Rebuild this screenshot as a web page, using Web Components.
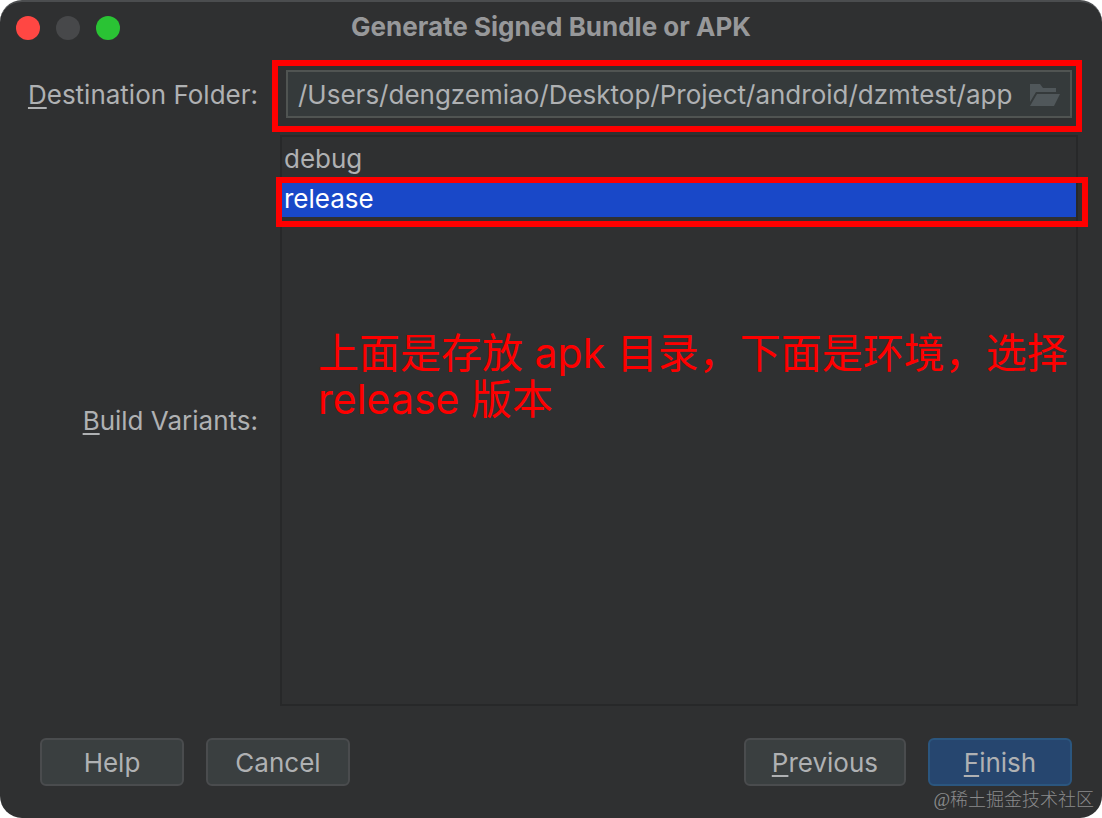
<!DOCTYPE html>
<html lang="en">
<head>
<meta charset="utf-8">
<title>Generate Signed Bundle or APK</title>
<style>
  body { margin: 0; background: #fff; font-family: Inter, "Noto Sans CJK SC", sans-serif; }
</style>
</head>
<body>
<sign-dialog></sign-dialog>
<script>
const define = (name, html) => {
  const template = document.createElement('template');
  template.innerHTML = html;
  customElements.define(name, class extends HTMLElement {
    constructor() {
      super();
      this.attachShadow({ mode: 'open' }).append(template.content.cloneNode(true));
    }
  });
};

define('title-bar', `
  <style>
    :host { display: grid; grid-template-columns: 1fr auto 1fr; align-items: center; height: 52px; padding: 0 16px; }
    .lights { display: flex; gap: 16px; }
    button { width: 24px; height: 24px; padding: 0; border: 0; border-radius: 50%; background: #47484a; }
    .close { background: #ff4743; }
    .zoom { background: #2ac334; }
    h1 { margin: 0; padding-bottom: 2px; font-size: 26px; line-height: 32px; font-weight: 700; color: #97989a; }
  </style>
  <div class="lights">
    <button class="close" aria-label="Close"></button>
    <button aria-label="Minimize" disabled></button>
    <button class="zoom" aria-label="Zoom"></button>
  </div>
  <h1><slot></slot></h1>`);

/* Red frame drawn round whatever is slotted in */
define('red-frame', `
  <style>
    :host { display: block; position: relative; }
    :host::after { content: ""; position: absolute; inset: -10px -10px -14px -14px; border: 6px solid #fe0000; pointer-events: none; }
  </style>
  <slot></slot>`);

define('folder-row', `
  <style>
    :host { display: grid; grid-template-columns: 234px 1fr; column-gap: 28px; align-items: center; padding: 0 30px 0 24px; }
    label { padding-top: 2px; font-size: 26px; line-height: 32px; color: #afb1b3; text-align: right; white-space: nowrap; }
    u { text-decoration-thickness: 2px; text-underline-offset: 3px; text-decoration-skip-ink: none; }
    .box { display: flex; align-items: center; height: 48px; box-sizing: border-box; border: 2px solid #505452; background: #353a3b; padding: 0 10px; }
    input { flex: 1; min-width: 0; padding: 2px 0 0; border: 0; outline: 0; background: none; color: #afb1b3; font: 26px/32px Inter, sans-serif; }
    button { display: flex; padding: 0; border: 0; background: none; }
  </style>
  <label for="folder"><u>D</u>estination Folder:</label>
  <red-frame>
    <div class="box">
      <input id="folder" type="text" value="/Users/dengzemiao/Desktop/Project/android/dzmtest/app">
      <button aria-label="Browse">
        <svg width="32" height="24" viewBox="0 0 32 24" fill="#50575a"><path d="M2 2h10l3 4h13v4H8L2 20z"/><path d="M9 12h23l-6 12H2z"/></svg>
      </button>
    </div>
  </red-frame>`);

define('variants-row', `
  <style>
    :host { display: grid; grid-template-columns: 234px 1fr; column-gap: 22px; padding: 0 24px; }
    label { align-self: center; font-size: 26px; line-height: 32px; color: #afb1b3; text-align: right; white-space: nowrap; }
    u { text-decoration-thickness: 2px; text-underline-offset: 3px; text-decoration-skip-ink: none; }
    .list { position: relative; display: flex; }
    select { flex: 1; height: 100%; box-sizing: border-box; padding: 0; border: 2px solid #272829; border-radius: 0; outline: 0; background: #2f3031; overflow: hidden; font: 26px Inter, sans-serif; }
    option { height: 40px; min-height: 40px; box-sizing: border-box; padding: 6px 2px 0; color: #afb1b3; }
    option:checked { background: linear-gradient(#1948c8, #1948c8); -webkit-text-fill-color: #fff; }
    .frame { position: absolute; top: 42px; left: -4px; right: -10px; height: 50px; box-sizing: border-box; border: 6px solid #fe0000; pointer-events: none; }
    .note { position: absolute; top: 195px; left: 38px; right: 0; margin: 0; font-size: 41px; line-height: 46px; color: #fe0000; pointer-events: none; }
  </style>
  <label for="variants"><u>B</u>uild Variants:</label>
  <div class="list">
    <select id="variants" size="2"><option>debug</option><option selected>release</option></select>
    <div class="frame"></div>
    <p class="note"><slot></slot></p>
  </div>`);

define('push-button', `
  <style>
    :host { display: block; }
    button { min-width: 144px; height: 48px; padding: 2px 26px 0; border: 2px solid #4a4c4e; border-radius: 6px; background: #3a3f40; color: #afb1b3; font: 26px/32px Inter, sans-serif; }
    :host([primary]) button { background: #26466f; border-color: #2b567f; }
    ::slotted(u) { text-decoration-thickness: 2px; text-underline-offset: 3px; text-decoration-skip-ink: none; }
  </style>
  <button><slot></slot></button>`);

define('sign-dialog', `
  <style>
    :host { display: flex; flex-direction: column; position: relative; box-sizing: border-box; min-height: 100vh; border-top: 2px solid #4b4d4f; border-radius: 22px; background: #2f3031; overflow: hidden; }
    folder-row { padding-top: 16px; }
    variants-row { flex: 1; margin-top: 17px; }
    footer { display: flex; gap: 22px; padding: 32px 30px 32px 40px; }
    .gap { flex: 1; }
    .mark { position: absolute; right: 8px; bottom: 6px; font-size: 18px; line-height: 24px; font-family: "Liberation Serif", "Noto Sans CJK SC", serif; font-weight: 300; color: #8a8b8c; }
  </style>
  <title-bar>Generate Signed Bundle or APK</title-bar>
  <folder-row></folder-row>
  <variants-row>上面是存放 apk 目录，下面是环境，选择 release 版本</variants-row>
  <footer>
    <push-button>Help</push-button>
    <push-button>Cancel</push-button>
    <span class="gap"></span>
    <push-button><u>P</u>revious</push-button>
    <push-button primary><u>F</u>inish</push-button>
  </footer>
  <span class="mark">@稀土掘金技术社区</span>`);
</script>
</body>
</html>
